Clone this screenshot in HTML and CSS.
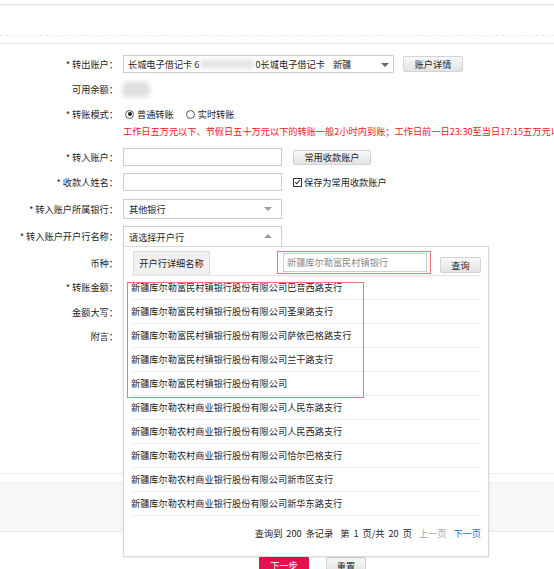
FILE: index.html
```html
<!DOCTYPE html>
<html lang="zh-CN">
<head>
<meta charset="utf-8">
<title>转账</title>
<link rel="stylesheet" href="styles.css">
</head>
<body>
<div class="page">
  <div class="hd-a"></div>
  <div class="hd-b"></div>
  <div class="hd-c"></div>

  <div class="form">
    <div class="row r1">
      <div class="lbl">* 转出账户：</div>
      <div class="fld">
        <div class="select wide">
          <span class="val">长城电子借记卡 6<span class="blur-num"></span>0长城电子借记卡<span class="sp"></span>新疆</span>
          <i class="arr down dark"></i>
        </div>
        <button class="btn btn-detail">账户详情</button>
      </div>
    </div>

    <div class="row r2">
      <div class="lbl">可用余额：</div>
      <div class="fld"><span class="blur-bal"></span></div>
    </div>

    <div class="row r3">
      <div class="lbl">* 转账模式：</div>
      <div class="fld">
        <span class="radio on"></span><span class="opt">普通转账</span>
        <span class="radio"></span><span class="opt">实时转账</span>
      </div>
    </div>

    <div class="row r4">
      <div class="lbl"></div>
      <div class="fld notice">工作日五万元以下、节假日五十万元以下的转账一般2小时内到账；工作日前一日23:30至当日17:15五万元以上的转账</div>
    </div>

    <div class="row r5">
      <div class="lbl">* 转入账户：</div>
      <div class="fld">
        <div class="input"></div>
        <button class="btn btn-common">常用收款账户</button>
      </div>
    </div>

    <div class="row r6">
      <div class="lbl">* 收款人姓名：</div>
      <div class="fld">
        <div class="input"></div>
        <span class="check"><svg viewBox="0 0 9 9" width="9" height="9"><path d="M1.6 4.6 L3.6 6.8 L7.6 1.6" fill="none" stroke="#222" stroke-width="1.3"/></svg></span>
        <span class="check-lbl">保存为常用收款账户</span>
      </div>
    </div>

    <div class="row r7">
      <div class="lbl">* 转入账户所属银行：</div>
      <div class="fld">
        <div class="select mid"><span class="val">其他银行</span><i class="arr down light"></i></div>
      </div>
    </div>

    <div class="row r8">
      <div class="lbl">* 转入账户开户行名称：</div>
      <div class="fld">
        <div class="select mid open"><span class="val">请选择开户行</span><i class="arr up light"></i></div>
      </div>
    </div>

    <div class="row r9">
      <div class="lbl">币种：</div>
      <div class="fld"></div>
    </div>
    <div class="row r10">
      <div class="lbl">* 转账金额：</div>
      <div class="fld"></div>
    </div>
    <div class="row r11">
      <div class="lbl">金额大写：</div>
      <div class="fld"></div>
    </div>
    <div class="row r12">
      <div class="lbl">附言：</div>
      <div class="fld"></div>
    </div>
  </div>

  <div class="sep"></div>
  <div class="band"></div>

  <div class="actions">
    <button class="btn-next">下一步</button>
    <button class="btn btn-reset">重置</button>
  </div>

  <div class="panel">
    <div class="pnl-head">
      <div class="tab">开户行详细名称</div>
      <div class="search-mark">
        <div class="search-input">新疆库尔勒富民村镇银行</div>
      </div>
      <button class="btn btn-query">查询</button>
    </div>
    <div class="pnl-list">
      <div class="item">新疆库尔勒富民村镇银行股份有限公司巴音西路支行</div>
      <div class="item">新疆库尔勒富民村镇银行股份有限公司圣果路支行</div>
      <div class="item">新疆库尔勒富民村镇银行股份有限公司萨依巴格路支行</div>
      <div class="item">新疆库尔勒富民村镇银行股份有限公司兰干路支行</div>
      <div class="item">新疆库尔勒富民村镇银行股份有限公司</div>
      <div class="item">新疆库尔勒农村商业银行股份有限公司人民东路支行</div>
      <div class="item">新疆库尔勒农村商业银行股份有限公司人民西路支行</div>
      <div class="item">新疆库尔勒农村商业银行股份有限公司恰尔巴格支行</div>
      <div class="item">新疆库尔勒农村商业银行股份有限公司新市区支行</div>
      <div class="item">新疆库尔勒农村商业银行股份有限公司新华东路支行</div>
    </div>
    <div class="pnl-foot">
      <span>查询到</span><span class="g1">200</span><span class="g1">条记录</span>
      <span class="g2">第</span><span class="g1">1</span><span class="g1">页/共</span><span class="g1">20</span><span class="g1">页</span>
      <span class="g2 prev">上一页</span><span class="g2 next">下一页</span>
    </div>
    <div class="list-mark"></div>
  </div>
</div>
</body>
</html>
```

FILE: styles.css
```css
* { box-sizing: border-box; }
html, body {
  margin: 0;
  padding: 0;
  background: #fff;
  overflow: hidden;
}
body {
  font-family: "Noto Sans CJK SC", "Noto Sans", sans-serif;
  font-size: 9.2px;
  color: #262626;
  width: 554px;
  height: 569px;
}
.page {
  position: relative;
  width: 554px;
  height: 569px;
  overflow: hidden;
}

/* header lines */
.hd-a { height: 5px; border-bottom: 1px solid #e4e4e4; box-shadow: 0 1px 1px #f2f2f2; }
.hd-b { height: 31px; border-bottom: 1px dashed #ebebeb; }
.hd-c { height: 8px; border-bottom: 1px solid #e8e8e8; }

/* form rows */
.form { display: flex; flex-direction: column; }
.row {
  display: grid;
  grid-template-columns: 118px 1fr;
  column-gap: 5px;
  align-items: center;
}
.lbl {
  text-align: right;
  white-space: nowrap;
  line-height: 12px;
  color: #262626;
}
.fld {
  display: flex;
  align-items: center;
  white-space: nowrap;
  min-width: 0;
}

.r1 { margin-top: 11px; height: 18px; }
.r2 { margin-top: 7px; height: 18px; }
.r3 { margin-top: 9px; height: 14px; }
.r4 { margin-top: 4px; height: 12px; }
.r5 { margin-top: 11px; height: 18px; }
.r6 { margin-top: 7px; height: 18px; }
.r7 { margin-top: 8px; height: 20px; }
.r8 { margin-top: 7px; height: 20px; }
.r9 { margin-top: 10px; height: 14px; }
.r10 { margin-top: 10px; height: 14px; }
.r11 { margin-top: 11px; height: 14px; }
.r12 { margin-top: 10px; height: 14px; }

/* selects and inputs */
.select {
  position: relative;
  height: 100%;
  border: 1px solid #cdcdcd;
  background: #fff;
  display: flex;
  align-items: center;
  padding-left: 4px;
}
.select.wide { width: 271px; height: 18px; }
.select.mid { width: 159px; height: 20px; padding-left: 5px; }
.select.open {
  border-bottom: none;
  height: 20px;
  align-self: flex-start;
  z-index: 3;
  box-shadow: 0 -1px 2px rgba(0,0,0,0.04);
}
.val { display: inline-flex; align-items: center; white-space: nowrap; }
.blur-num {
  display: inline-block;
  width: 54px;
  height: 10px;
  margin: 0 1px;
  background: #e6e6e6;
  border-radius: 3px;
  filter: blur(2px);
}
.sp { display: inline-block; width: 8px; }
.arr {
  position: absolute;
  width: 0;
  height: 0;
  border-left: 4px solid transparent;
  border-right: 4px solid transparent;
}
.arr.down { border-top: 4px solid #666; top: 7px; }
.arr.up { border-bottom: 4px solid #999; top: 7px; }
.select.wide .arr { right: 4px; }
.select.mid .arr { right: 9px; }
.arr.light.down { border-top-color: #9a9a9a; }

.input {
  width: 159px;
  height: 18px;
  border: 1px solid #cdcdcd;
  background: #fff;
}

.btn {
  font-family: inherit;
  font-size: 9.2px;
  color: #262626;
  border: 1px solid #d3d3d3;
  border-radius: 2px;
  background: linear-gradient(#f8f8f8, #e3e3e3);
  padding: 0;
  line-height: 13px;
  cursor: pointer;
}
.btn-detail { width: 60px; height: 16px; margin-left: 9px; }
.btn-common { width: 78px; height: 15px; margin-left: 11px; }

.blur-bal {
  display: inline-block;
  width: 28px;
  height: 15px;
  margin-left: -1px;
  background: #dedede;
  border-radius: 5px;
  filter: blur(2.5px);
}

.radio {
  display: inline-block;
  width: 9px;
  height: 9px;
  border: 1px solid #555;
  border-radius: 50%;
  background: #fff;
  position: relative;
  margin-left: 2px;
}
.radio.on::after {
  content: "";
  position: absolute;
  left: 1.5px;
  top: 1.5px;
  width: 4px;
  height: 4px;
  border-radius: 50%;
  background: #222;
}
.opt { margin-left: 3px; margin-right: 10px; }

.notice {
  color: #ee1515;
  line-height: 12px;
  overflow: visible;
}

.check {
  display: inline-flex;
  width: 9px;
  height: 9px;
  border: 1px solid #333;
  margin-left: 11px;
  align-items: center;
  justify-content: center;
  background: #fff;
}
.check svg { display: block; width: 8px; height: 8px; }
.check-lbl { margin-left: 2px; }

/* lower section */
.sep { margin-top: 130px; border-top: 1px solid #ececec; }
.band {
  margin-top: 8px;
  height: 50px;
  background: #f7f7f7;
  border-top: 1px solid #ececec;
  border-bottom: 1px solid #ececec;
}
.actions {
  display: flex;
  margin-top: 25px;
  padding-left: 259px;
  gap: 17px;
}
.btn-next {
  font-family: inherit;
  font-size: 9.2px;
  width: 50px;
  height: 16px;
  border: none;
  border-radius: 1px;
  background: #e3124e;
  color: #fff;
  padding: 0;
  line-height: 16px;
}
.btn-reset { width: 40px; height: 16px; line-height: 16px; }

/* dropdown panel */
.panel {
  position: absolute;
  left: 123px;
  top: 246px;
  width: 366px;
  height: 311px;
  border: 1px solid #d9d9d9;
  background: #fff;
  box-shadow: 0 1px 3px rgba(0,0,0,0.08);
  z-index: 2;
}
.pnl-head {
  margin: 0 7px;
  height: 29px;
  border-bottom: 1px solid #e6e6e6;
  display: flex;
  align-items: flex-start;
  padding-left: 2px;
}
.tab {
  margin-top: 4px;
  width: 77px;
  height: 24px;
  line-height: 23px;
  text-align: center;
  background: #f1f1f1;
  border: 1px solid #dcdcdc;
  border-bottom: none;
  color: #262626;
}
.search-mark {
  margin-top: 4px;
  margin-left: 67px;
  width: 154px;
  height: 23px;
  border: 1.5px solid #f07482;
  padding: 1px 3px 0 5px;
}
.search-input {
  height: 19px;
  border: 1px solid #cfcfcf;
  line-height: 17px;
  padding-left: 3px;
  color: #8a8a8a;
  white-space: nowrap;
}
.btn-query {
  margin-top: 10px;
  margin-left: 9px;
  width: 41px;
  height: 16px;
}
.pnl-list { margin: 0 7px; }
.item {
  height: 24px;
  line-height: 23px;
  border-bottom: 1px solid #efefef;
  white-space: nowrap;
  color: #262626;
}
.pnl-foot {
  margin: 0 7px;
  padding-top: 10px;
  line-height: 14px;
  display: flex;
  justify-content: flex-end;
  white-space: nowrap;
  color: #262626;
}
.g1 { margin-left: 4px; }
.g2 { margin-left: 7px; }
.prev { color: #a6a6a6; }
.next { color: #2b6fb6; }
.list-mark {
  position: absolute;
  left: 3px;
  top: 35px;
  width: 237px;
  height: 116px;
  border: 1.5px solid #f07482;
  pointer-events: none;
}
```
